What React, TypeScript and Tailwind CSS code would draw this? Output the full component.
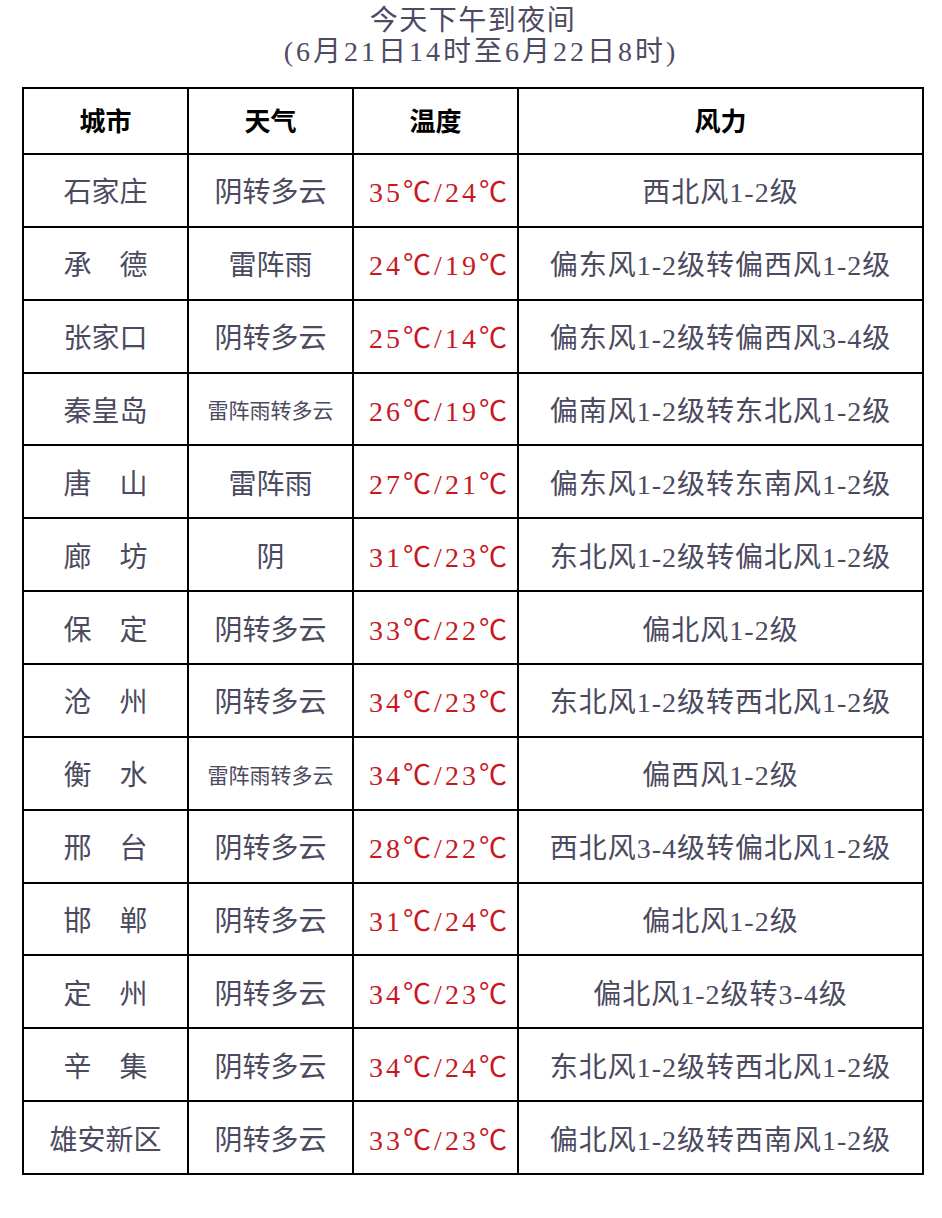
const rows: [string, string, string, string][] = [
  ['石家庄', '阴转多云', '35℃/24℃', '西北风1-2级'],
  ['承　德', '雷阵雨', '24℃/19℃', '偏东风1-2级转偏西风1-2级'],
  ['张家口', '阴转多云', '25℃/14℃', '偏东风1-2级转偏西风3-4级'],
  ['秦皇岛', '雷阵雨转多云', '26℃/19℃', '偏南风1-2级转东北风1-2级'],
  ['唐　山', '雷阵雨', '27℃/21℃', '偏东风1-2级转东南风1-2级'],
  ['廊　坊', '阴', '31℃/23℃', '东北风1-2级转偏北风1-2级'],
  ['保　定', '阴转多云', '33℃/22℃', '偏北风1-2级'],
  ['沧　州', '阴转多云', '34℃/23℃', '东北风1-2级转西北风1-2级'],
  ['衡　水', '雷阵雨转多云', '34℃/23℃', '偏西风1-2级'],
  ['邢　台', '阴转多云', '28℃/22℃', '西北风3-4级转偏北风1-2级'],
  ['邯　郸', '阴转多云', '31℃/24℃', '偏北风1-2级'],
  ['定　州', '阴转多云', '34℃/23℃', '偏北风1-2级转3-4级'],
  ['辛　集', '阴转多云', '34℃/24℃', '东北风1-2级转西北风1-2级'],
  ['雄安新区', '阴转多云', '33℃/23℃', '偏北风1-2级转西南风1-2级'],
]

const font = "font-['Liberation_Serif','Noto_Sans_CJK_SC',serif]"

export default function App() {
  return (
    <div className={`min-h-[1218px] w-[942px] bg-white ${font}`}>
      <div className="pt-[5px] text-center text-[28px] leading-[31px] text-[#4e4a63]">
        <div className="pl-[4px] tracking-[1.5px]">今天下午到夜间</div>
        <div className="pl-[20px] tracking-[3px]">(6月21日14时至6月22日8时)</div>
      </div>

      <table className="mt-[20px] ml-[22px] w-[900px] table-fixed border-collapse">
        <colgroup>
          <col className="w-[165px]" />
          <col className="w-[165px]" />
          <col className="w-[165px]" />
          <col className="w-[405px]" />
        </colgroup>
        <thead>
          <tr className="h-[66px] text-[26px] font-medium text-black">
            <th className="border-2 border-black pt-[2px]">城市</th>
            <th className="border-2 border-black pt-[2px]">天气</th>
            <th className="border-2 border-black pt-[2px]">温度</th>
            <th className="border-2 border-black pt-[2px]">风力</th>
          </tr>
        </thead>
        <tbody>
          {rows.map(([city, weather, temp, wind], i) => (
            <tr key={i} className="h-[72.86px] text-center text-[28px] text-[#4b4a5f]">
              <td className="border-2 border-black pt-[6px]">{city}</td>
              <td
                className={`border-2 border-black pt-[6px] ${
                  weather.length > 4 ? 'text-[21px]' : ''
                }`}
              >
                {weather}
              </td>
              <td className="border-2 border-black pt-[6px] pl-[8px] tracking-[3px] text-[#c8181f]">
                {temp}
              </td>
              <td className="border-2 border-black pt-[6px] tracking-[1px]">{wind}</td>
            </tr>
          ))}
        </tbody>
      </table>
    </div>
  )
}
